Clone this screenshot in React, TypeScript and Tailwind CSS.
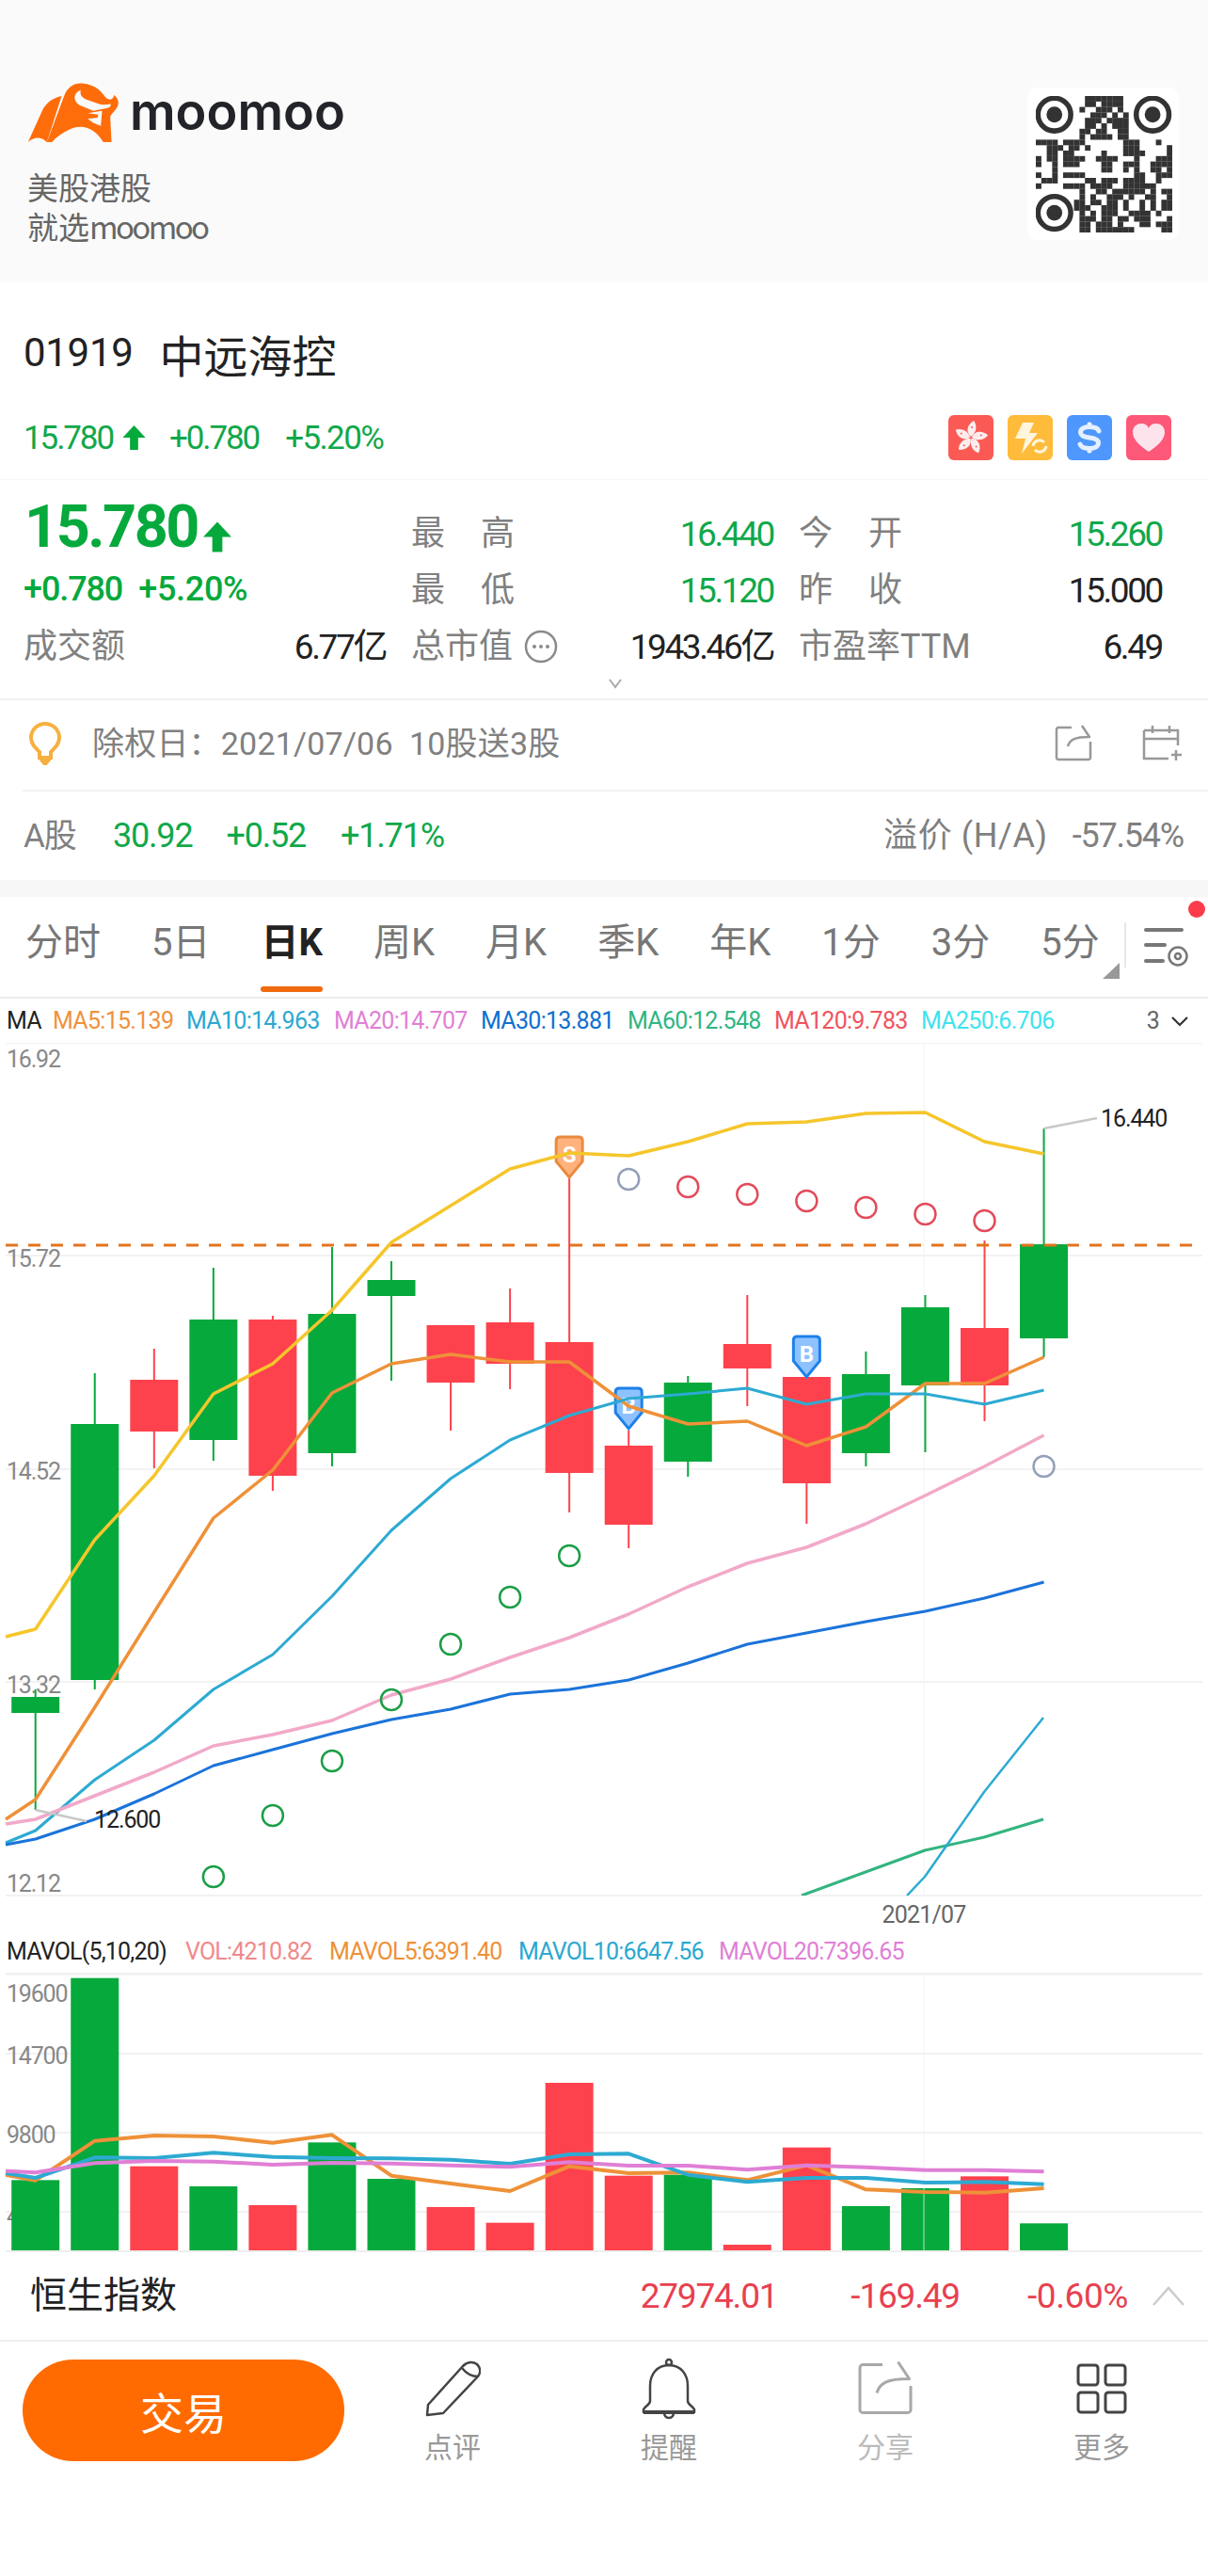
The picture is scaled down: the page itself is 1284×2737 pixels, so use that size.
import React from 'react';

const GREEN = '#06a93c';
const RED = '#fe424d';

const cx = (i: number) => 37.7 + 63.05 * i;
const top = 1109;
const volTop = 2097;

type Candle = { up: boolean; t: number; b: number; h: number; l: number };

// pixel values read off the picture, page coordinates
const candles: Candle[] = [
  { up: true, t: 1804, b: 1821, h: 1796, l: 1924 },
  { up: true, t: 1514, b: 1786, h: 1460, l: 1796 },
  { up: false, t: 1467, b: 1522, h: 1434, l: 1561 },
  { up: true, t: 1403, b: 1531, h: 1348, l: 1553 },
  { up: false, t: 1403, b: 1569, h: 1399, l: 1585 },
  { up: true, t: 1397, b: 1545, h: 1326, l: 1559 },
  { up: true, t: 1361, b: 1378, h: 1341, l: 1468 },
  { up: false, t: 1409, b: 1470, h: 1409, l: 1521 },
  { up: false, t: 1406, b: 1450, h: 1370, l: 1477 },
  { up: false, t: 1427, b: 1566, h: 1252, l: 1608 },
  { up: false, t: 1537, b: 1621, h: 1521, l: 1646 },
  { up: true, t: 1470, b: 1554, h: 1463, l: 1570 },
  { up: false, t: 1429, b: 1455, h: 1377, l: 1495 },
  { up: false, t: 1464, b: 1577, h: 1463, l: 1620 },
  { up: true, t: 1461, b: 1545, h: 1437, l: 1559 },
  { up: true, t: 1390, b: 1473, h: 1377, l: 1544 },
  { up: false, t: 1412, b: 1473, h: 1319, l: 1511 },
  { up: true, t: 1323, b: 1423, h: 1200, l: 1443 },
];

const yellow = [1732, 1637, 1569, 1482, 1450, 1393, 1321, 1282, 1243, 1226, 1229, 1214, 1195, 1193, 1184, 1183, 1214, 1227];
const orange = [1913, 1815, 1714, 1614, 1563, 1481, 1450, 1440, 1448, 1448, 1495, 1514, 1511, 1537, 1517, 1471, 1471, 1443];
const cyan = [1946, 1892, 1850, 1796, 1759, 1697, 1627, 1572, 1531, 1505, 1487, 1482, 1476, 1493, 1482, 1482, 1493, 1478];
const pink = [1934, 1909, 1884, 1856, 1844, 1829, 1802, 1785, 1762, 1741, 1716, 1687, 1662, 1645, 1620, 1590, 1559, 1526];
const blue = [1955, 1934, 1907, 1877, 1860, 1843, 1828, 1817, 1801, 1796, 1786, 1768, 1748, 1736, 1724, 1713, 1699, 1682];

const volBars = [832, 188, 788, 852, 912, 712, 828, 918, 968, 522, 818, 815, 1038, 728, 915, 858, 820, 970];
const volOrange = [833, 707, 690, 693, 713, 688, 818, 843, 867, 788, 810, 808, 832, 785, 862, 870, 872, 858];
const volBlue = [825, 760, 762, 745, 758, 762, 763, 767, 780, 750, 748, 815, 838, 825, 825, 840, 838, 845];
const volPurple = [808, 778, 771, 773, 783, 777, 779, 785, 790, 775, 786, 786, 799, 785, 791, 800, 800, 805];

const pts = (ys: number[], startY: number) =>
  `6,${startY - top} ` + ys.map((y, i) => `${cx(i)},${y - top}`).join(' ');
const volY = (z: number) => 2040 + z / 3 - volTop;
const volPts = (zs: number[], start: number) =>
  `6,${volY(start)} ` + zs.map((z, i) => `${cx(i)},${volY(z)}`).join(' ');

const qrRows = [
  '.........#######.........',
  '.........##.####.........',
  '........#..###.#.........',
  '..........###.#.#........',
  '.........###.####........',
  '.........##.#.###........',
  '........##.##..##........',
  '........#.####.##........',
  '####.####.......###...#..',
  '..###.##.#......###.....#',
  '..##.##.....#...####....#',
  '#.##.####..####...#...###',
  '#..#.###....##..###..####',
  '...#........##..#.#..##.#',
  '#..#.####.........##..###',
  '.###.....##.###.####..#..',
  '#....####.####..######...',
  '........#..##.######.#.##',
  '........#.#..###.#..##..#',
  '.......##.##.##.#..#.#.##',
  '.......###..###.#..#.#.##',
  '........#.#.###..####.#..',
  '........###.##.##.###...#',
  '........##.###.#...##.###',
  '........##.#######.....##',
];

const QrCode = () => (
  <div className="w-[161px] h-[162px] bg-white rounded-[10px] pl-[9px] pt-[9px]">
    <svg width="145" height="145" viewBox="0 0 25 25" fill="#333">
      {qrRows.map((row, r) =>
        row.split('').map((c, col) => (c === '#' ? <rect key={`${r}-${col}`} x={col} y={r} width="1.02" height="1.02" /> : null))
      )}
      {[[3.4, 3.4], [21.4, 3.4], [3.4, 21.4]].map(([x, y]) => (
        <g key={`${x}-${y}`}>
          <circle cx={x} cy={y} r="3" fill="none" stroke="#333" strokeWidth="0.95" />
          <circle cx={x} cy={y} r="1.45" />
        </g>
      ))}
    </svg>
  </div>
);

const Logo = () => (
  <svg width="99" height="66" viewBox="88 50 296 198" className="shrink-0">
    <path fill="#ff6d0a" d="M90 242L136 140C146 120 165 102 197 95L150 242C130 222 108 226 90 242Z" />
    <path fill="#ff6d0a" d="M150 242L205 95C216 65 240 52 265 55C300 58 322 76 336 98C350 112 362 106 364 92C376 100 384 118 372 134C366 144 358 150 352 160L356 242H330C302 194 260 184 226 200C200 212 180 226 166 242Z" />
    <path fill="#fafafa" d="M258 76C234 84 232 110 254 124L298 142L340 134C352 132 356 126 352 120C340 124 326 124 310 118L276 106C262 100 254 90 258 76Z" />
    <path fill="#fafafa" d="M280 150L326 142L322 190C306 186 292 178 280 168L312 164L314 154Z" />
  </svg>
);

const HkIcon = () => (
  <svg width="48" height="48" viewBox="0 0 48 48">
    <rect width="48" height="48" rx="6" fill="#fb5a54" />
    {[0, 72, 144, 216, 288].map(a => (
      <g key={a} transform={`rotate(${a} 24 24)`}>
        <path d="M24 23C18 18 20 10 27 6C31 11 30 19 24 23Z" fill="#fdeeee" />
        <circle cx="25" cy="13" r="1" fill="#fb5a54" />
      </g>
    ))}
  </svg>
);

const BoltIcon = () => (
  <svg width="48" height="48" viewBox="0 0 48 48">
    <rect width="48" height="48" rx="6" fill="#ffbb3a" />
    <path d="M16 8H28L23 19H32L15 41L19 25H8Z" fill="#fff4dc" />
    <path d="M27 33A7 7 0 0 1 39 29M41 33A7 7 0 0 1 29 37" fill="none" stroke="#fff4dc" strokeWidth="3" />
  </svg>
);

const DollarIcon = () => (
  <svg width="48" height="48" viewBox="0 0 48 48">
    <rect width="48" height="48" rx="6" fill="#4e97fc" />
    <path d="M34 17C33 14 29 12.5 24 12.5C18 12.5 14.5 15 14.5 18.5C14.5 22 18 23.2 24 24C30 24.8 33.5 26 33.5 29.5C33.5 33 30 35.5 24 35.5C19 35.5 15 34 14 31" fill="none" stroke="#e4f0ff" strokeWidth="5" strokeLinecap="round" />
    <rect x="21.5" y="7.5" width="5" height="5" rx="2" fill="#e4f0ff" />
    <rect x="21.5" y="35.5" width="5" height="5" rx="2" fill="#e4f0ff" />
  </svg>
);

const HeartIcon = () => (
  <svg width="48" height="48" viewBox="0 0 48 48">
    <rect width="48" height="48" rx="6" fill="#fd5878" />
    <path d="M24 39C14 32 7 26 7 18C7 12 12 9 16 9C20 9 23 11 24 14C25 11 28 9 32 9C36 9 41 12 41 18C41 26 34 32 24 39Z" fill="#fde4ec" />
  </svg>
);

const UpArrow = ({ w, h }: { w: number; h: number }) => (
  <svg width={w} height={h} viewBox="0 0 28 30" fill={GREEN} className="shrink-0">
    <path d="M14 0L28 15H19V30H9V15H0Z" />
  </svg>
);

const ShareIcon = ({ size, color, sw }: { size: number; color: string; sw: number }) => (
  <svg width={size} height={size} viewBox="0 0 40 40" fill="none" stroke={color} strokeWidth={sw}>
    <path d="M18 3H4C3 3 2 4 2 5V35C2 36 3 37 4 37H36C37 37 38 36 38 35V18" />
    <path d="M14 23C16 16 21 13 37 13L29 1" strokeLinejoin="round" />
  </svg>
);

const Marker = ({ x, y, fill, stroke, label }: { x: number; y: number; fill: string; stroke: string; label: string }) => (
  <g>
    <path
      d={`M${x - 14} ${y + 5}Q${x - 14} ${y + 1} ${x - 10} ${y + 1}H${x + 10}Q${x + 14} ${y + 1} ${x + 14} ${y + 5}V${y + 27}L${x} ${y + 44}L${x - 14} ${y + 27}Z`}
      fill={fill}
      stroke={stroke}
      strokeWidth="3"
    />
    <text x={x} y={y + 28} textAnchor="middle" fontSize="24" fontWeight="700" fill="#fff">{label}</text>
  </g>
);

const AxisLabel = ({ y, children }: { y: number; children: React.ReactNode }) => (
  <text x="7" y={y} fontSize="25" letterSpacing="-1.2" fill="#888">{children}</text>
);

const PriceChart = () => {
  const h = 2052 - top;
  const sp = (y: number) => y - top;
  return (
    <svg width="1284" height={h} viewBox={`0 0 1284 ${h}`} className="block">
      <defs>
        <clipPath id="plot"><rect x="0" y="0" width="1284" height={sp(2015)} /></clipPath>
      </defs>
      {[1109, 1335, 1562, 1788, 2015].map(y => (
        <line key={y} x1="6" x2="1278" y1={sp(y)} y2={sp(y)} stroke="#f2f2f2" strokeWidth="2" />
      ))}
      <line x1="982" x2="982" y1="0" y2={sp(2015)} stroke="#f2f2f2" strokeWidth="1" />
      <AxisLabel y={sp(1135)}>16.92</AxisLabel>
      <AxisLabel y={sp(1347)}>15.72</AxisLabel>
      <AxisLabel y={sp(1573)}>14.52</AxisLabel>
      <AxisLabel y={sp(1800)}>13.32</AxisLabel>
      <AxisLabel y={sp(2011)}>12.12</AxisLabel>
      {candles.map((c, i) => {
        const color = c.up ? GREEN : RED;
        return (
          <g key={i}>
            <line x1={cx(i)} x2={cx(i)} y1={sp(c.h)} y2={sp(c.l)} stroke={color} strokeWidth="2" />
            <rect x={cx(i) - 25.5} y={sp(c.t)} width="51" height={c.b - c.t} fill={color} />
          </g>
        );
      })}
      <line x1="6" x2="1268" y1={sp(1324)} y2={sp(1324)} stroke="#e2741f" strokeWidth="3" strokeDasharray="13 11" />
      <Marker x={cx(9)} y={sp(1208)} fill="#ffb27c" stroke="#ea8a3e" label="S" />
      <Marker x={cx(10)} y={sp(1475)} fill="#8ec2ff" stroke="#1e80ea" label="B" />
      <Marker x={cx(13)} y={sp(1420)} fill="#8ec2ff" stroke="#1e80ea" label="B" />
      <g fill="none" strokeLinejoin="round" clipPath="url(#plot)">
        <polyline points={pts(yellow, 1740)} stroke="#f5c62c" strokeWidth="3.5" />
        <polyline points={pts(orange, 1934)} stroke="#ee9138" strokeWidth="3.5" />
        <polyline points={pts(cyan, 1959)} stroke="#2daad2" strokeWidth="3" />
        <polyline points={pts(pink, 1939)} stroke="#f2a9c9" strokeWidth="3.5" />
        <polyline points={pts(blue, 1961)} stroke="#1b73da" strokeWidth="3" />
        <polyline points={`852,${sp(2015)} 920,${sp(1990)} 983,${sp(1967)} 1046,${sp(1953)} 1109,${sp(1934)}`} stroke="#33b47f" strokeWidth="3" />
        <polyline points={`964,${sp(2015)} 983,${sp(1995)} 1046,${sp(1905)} 1109,${sp(1826)}`} stroke="#2daad2" strokeWidth="2.5" />
      </g>
      <g fill="none" strokeWidth="2.5">
        {[[3, 1995], [4, 1930], [5, 1872], [6, 1807], [7, 1748], [8, 1698], [9, 1654]].map(([i, y]) => (
          <circle key={i} cx={cx(i)} cy={sp(y)} r="11" stroke="#1a9e46" />
        ))}
        {[[11, 1262], [12, 1270], [13, 1277], [14, 1284], [15, 1291], [16, 1298]].map(([i, y]) => (
          <circle key={i} cx={cx(i)} cy={sp(y)} r="11" stroke="#e24b5a" />
        ))}
        <circle cx={cx(10)} cy={sp(1254)} r="11" stroke="#93a0b8" />
        <circle cx={cx(17)} cy={sp(1559)} r="11" stroke="#93a0b8" />
      </g>
      <polyline points={`${cx(17)},${sp(1200)} 1166,${sp(1189)}`} stroke="#c8c8c8" strokeWidth="2.5" fill="none" />
      <text x="1170" y={sp(1198)} fontSize="25" letterSpacing="-1.1" fill="#222">16.440</text>
      <polyline points={`${cx(0)},${sp(1924)} 92,${sp(1936)}`} stroke="#c8c8c8" strokeWidth="2.5" fill="none" />
      <text x="100" y={sp(1943)} fontSize="25" letterSpacing="-1.1" fill="#222">12.600</text>
      <text x="982" y={sp(2044)} fontSize="25" letterSpacing="-0.8" textAnchor="middle" fill="#666">2021/07</text>
    </svg>
  );
};

const VolumeChart = () => {
  const h = 2394 - volTop;
  return (
    <svg width="1284" height={h} viewBox={`0 0 1284 ${h}`} className="block">
      <line x1="6" x2="1278" y1="1" y2="1" stroke="#f0f0f0" strokeWidth="3" />
      {[2183, 2267, 2351].map(y => (
        <line key={y} x1="6" x2="1278" y1={y - volTop} y2={y - volTop} stroke="#f2f2f2" strokeWidth="2" />
      ))}
      <line x1="982" x2="982" y1="0" y2={2392 - volTop} stroke="#f2f2f2" strokeWidth="1" />
      <AxisLabel y={2128 - volTop}>19600</AxisLabel>
      <AxisLabel y={2194 - volTop}>14700</AxisLabel>
      <AxisLabel y={2278 - volTop}>9800</AxisLabel>
      <AxisLabel y={2364 - volTop}>4900</AxisLabel>
      {volBars.map((z, i) => (
        <rect key={i} x={cx(i) - 25.5} y={volY(z)} width="51" height={2392 - volTop - volY(z)} fill={candles[i].up ? GREEN : RED} />
      ))}
      <line x1="982" x2="982" y1={volY(858)} y2={2392 - volTop} stroke="#ffffff" strokeOpacity="0.7" strokeWidth="1" />
      <g fill="none" strokeLinejoin="round" strokeWidth="4">
        <polyline points={volPts(volOrange, 815)} stroke="#ee9138" />
        <polyline points={volPts(volBlue, 810)} stroke="#2daad2" />
        <polyline points={volPts(volPurple, 803)} stroke="#e07fd6" />
      </g>
      <line x1="6" x2="1278" y1={2393 - volTop} y2={2393 - volTop} stroke="#eeeeee" strokeWidth="2" />
    </svg>
  );
};

const Stat = ({ label, value, color }: { label: React.ReactNode; value: string; color: string }) => (
  <div className="flex items-center justify-between h-[60px]">
    <span className="text-[36px] leading-none text-[#808080]">{label}</span>
    <span className={`text-[37px] leading-none tracking-[-2.4px] ${color}`}>{value}</span>
  </div>
);

const TwoChar = ({ a, b }: { a: string; b: string }) => (
  <span className="flex w-[110px] justify-between"><span>{a}</span><span>{b}</span></span>
);

const tabs = ['分时', '5日', '日K', '周K', '月K', '季K', '年K', '1分', '3分', '5分'];

const maItems = [
  { text: 'MA5:15.139', color: 'text-[#f0923b]', w: 'w-[142px]' },
  { text: 'MA10:14.963', color: 'text-[#2ba8d0]', w: 'w-[157px]' },
  { text: 'MA20:14.707', color: 'text-[#e07fd6]', w: 'w-[156px]' },
  { text: 'MA30:13.881', color: 'text-[#0f6fd0]', w: 'w-[156px]' },
  { text: 'MA60:12.548', color: 'text-[#2fb583]', w: 'w-[156px]' },
  { text: 'MA120:9.783', color: 'text-[#f0545d]', w: 'w-[156px]' },
  { text: 'MA250:6.706', color: 'text-[#3fe3ee]', w: 'w-[156px]' },
];

const BottomItem = ({ icon, label, color }: { icon: React.ReactNode; label: string; color: string }) => (
  <div className="w-[230px] shrink-0 flex flex-col items-center">
    <div className="h-[70px] flex items-center justify-center">{icon}</div>
    <span className={`text-[30px] leading-none mt-[13px] ${color}`}>{label}</span>
  </div>
);

export default function App() {
  return (
    <div className="w-[1284px] h-[2737px] bg-white overflow-hidden font-['Roboto','Noto_Sans_CJK_SC',sans-serif]">
      {/* promo header */}
      <div className="h-[300px] bg-[#fafafa] flex justify-between pl-[29px] pr-[31px] pt-[87px] font-['Noto_Sans_CJK_SC','Noto_Sans',sans-serif]">
        <div>
          <div className="flex items-center h-[66px]">
            <Logo />
            <span className="ml-[10px] text-[54px] leading-none font-semibold text-[#222429] font-['Inter',sans-serif] mt-[-2px]">moomoo</span>
          </div>
          <div className="mt-[24px] text-[33px] leading-[42px] text-[#666]">美股港股</div>
          <div className="text-[33px] leading-[42px] text-[#666]">
            就选<span className="tracking-[-2.6px]">moomoo</span>
          </div>
        </div>
        <div className="pt-[6px]"><QrCode /></div>
      </div>

      {/* name */}
      <div className="h-[209px] pl-[25px] pr-[39px] pt-[47px]">
        <div className="flex items-center h-[56px] text-[#222]">
          <span className="text-[42px] leading-none tracking-[-0.3px]">01919</span>
          <span className="ml-[28px] text-[47px] leading-none font-['Noto_Sans_CJK_SC',sans-serif]">中远海控</span>
        </div>
        <div className="flex items-center justify-between mt-[38px] h-[48px]">
          <div className="flex items-center text-[35px] leading-none tracking-[-2.1px] text-[#10a84a]">
            <span>15.780</span>
            <span className="ml-[9px]"><UpArrow w={27} h={26} /></span>
            <span className="ml-[24px]">+0.780</span>
            <span className="ml-[28px] tracking-[-1.6px]">+5.20%</span>
          </div>
          <div className="flex gap-[15px]">
            <HkIcon />
            <BoltIcon />
            <DollarIcon />
            <HeartIcon />
          </div>
        </div>
      </div>

      {/* quote */}
      <div className="h-[235px] border-t border-[#f6f6f6] border-b-2 border-b-[#f0f0f0] relative pl-[25px] pr-[49px] pt-[27px]">
        <div className="grid grid-cols-[385px_385px_386px] gap-x-[27px]">
          <div className="row-span-2 text-[#06a93c]">
            <div className="flex items-end h-[60px] mt-[-7px]">
              <span className="text-[63px] leading-[60px] font-bold tracking-[-2.5px] ml-[1px]">15.780</span>
              <span className="ml-[6px] mb-[2px]"><UpArrow w={30} h={35} /></span>
            </div>
            <div className="flex mt-[18px] text-[36px] leading-[36px] font-medium tracking-[-1.1px]">
              <span>+0.780</span>
              <span className="ml-[17px] tracking-[-0.3px]">+5.20%</span>
            </div>
          </div>
          <Stat label={<TwoChar a="最" b="高" />} value="16.440" color="text-[#10a84a]" />
          <Stat label={<TwoChar a="今" b="开" />} value="15.260" color="text-[#10a84a]" />
          <Stat label={<TwoChar a="最" b="低" />} value="15.120" color="text-[#10a84a]" />
          <Stat label={<TwoChar a="昨" b="收" />} value="15.000" color="text-[#222]" />
          <Stat label="成交额" value="6.77亿" color="text-[#222]" />
          <Stat
            label={
              <span className="flex items-center">
                总市值
                <svg width="36" height="36" viewBox="0 0 36 36" className="ml-[12px]" fill="none">
                  <circle cx="18" cy="18" r="16" stroke="#8a8a8a" strokeWidth="2.5" />
                  <circle cx="11" cy="18" r="2" fill="#8a8a8a" />
                  <circle cx="18" cy="18" r="2" fill="#8a8a8a" />
                  <circle cx="25" cy="18" r="2" fill="#8a8a8a" />
                </svg>
              </span>
            }
            value="1943.46亿"
            color="text-[#222]"
          />
          <Stat label="市盈率TTM" value="6.49" color="text-[#222]" />
        </div>
        <svg width="16" height="12" viewBox="0 0 16 12" fill="none" stroke="#aaa" strokeWidth="2" className="absolute left-[646px] top-[210px]">
          <path d="M2 2L8 10L14 2" />
        </svg>
      </div>

      {/* ex-dividend */}
      <div className="h-[95px] flex items-center justify-between pl-[31px] pr-[25px] pb-[4px]">
        <div className="flex items-center">
          <svg width="34" height="46" viewBox="0 0 34 46" fill="none" stroke="#f6b03f" strokeWidth="4">
            <path d="M11 32C6 27 2 23 2 17C2 8 9 2 17 2C25 2 32 8 32 17C32 23 28 27 23 32V38H11Z" />
            <path d="M13 40H21L17 45Z" fill="#f6b03f" />
          </svg>
          <span className="ml-[33px] text-[34px] leading-none text-[#808080] tracking-[0.2px]">除权日：2021/07/06&nbsp;&nbsp;10股送3股</span>
        </div>
        <div className="flex items-center gap-[53px]">
          <ShareIcon size={40} color="#999" sw={2.5} />
          <svg width="45" height="40" viewBox="0 0 45 40" fill="none" stroke="#999" strokeWidth="2.5">
            <path d="M2 6H38V22M28 36H2V6M2 15H38M11 1V9M29 1V9M36 27V38M31 32H42" />
          </svg>
        </div>
      </div>

      {/* A share */}
      <div className="ml-[24px] h-[96px] border-t-2 border-[#f2f2f2] flex items-center justify-between pr-[26px] text-[36px] leading-none">
        <div className="flex items-center tracking-[-1.2px] text-[#10a84a]">
          <span className="text-[#808080] w-[95px] ml-[1px] text-[35px]">A股</span>
          <span>30.92</span>
          <span className="ml-[36px]">+0.52</span>
          <span className="ml-[37px]">+1.71%</span>
        </div>
        <div className="flex items-center text-[#808080] tracking-[0.6px]">
          <span>溢价 (H/A)</span>
          <span className="ml-[26px] tracking-[-1.2px]">-57.54%</span>
        </div>
      </div>
      <div className="h-[18px] bg-[#f7f7f7]" />

      {/* period tabs */}
      <div className="h-[108px] relative flex items-center border-b-2 border-[#ececec] pl-[27px] gap-[54px] pb-[8px]">
        {tabs.map(t => (
          <div key={t} className="relative whitespace-nowrap">
            <span className={`text-[40px] leading-none ${t === '日K' ? 'font-bold text-[#222]' : 'text-[#777]'}`}>{t}</span>
            {t === '日K' && <div className="absolute left-0 right-0 top-[66px] h-[6px] rounded-full bg-[#f06a10]" />}
          </div>
        ))}
        <div className="absolute left-[1172px] top-[70px] w-0 h-0 border-l-[18px] border-l-transparent border-b-[17px] border-b-[#999]" />
        <div className="absolute left-[1195px] top-[27px] w-[2px] h-[48px] bg-[#e8e8e8]" />
        <svg width="48" height="44" viewBox="0 0 48 44" fill="none" stroke="#777" className="absolute left-[1216px] top-[31px]">
          <path d="M2 4H40M2 20H22M2 37H20" strokeWidth="4" strokeLinecap="round" />
          <circle cx="36" cy="32" r="9.5" strokeWidth="2.5" />
          <circle cx="36" cy="32" r="3" strokeWidth="2.5" />
        </svg>
        <div className="absolute left-[1263px] top-[4px] w-[18px] h-[18px] rounded-full bg-[#fb3c4a]" />
      </div>

      {/* MA legend */}
      <div className="h-[47px] flex items-center pl-[7px] pr-[21px] text-[25px] leading-none tracking-[-0.7px]">
        <span className="w-[49px] text-[#222]">MA</span>
        {maItems.map(m => (
          <span key={m.text} className={`${m.w} ${m.color}`}>{m.text}</span>
        ))}
        <span className="ml-auto text-[#666]">3</span>
        <svg width="18" height="12" viewBox="0 0 18 12" fill="none" stroke="#333" strokeWidth="2.2" className="ml-[13px]">
          <path d="M1 2L9 10L17 2" />
        </svg>
      </div>

      <PriceChart />

      {/* volume legend */}
      <div className="h-[45px] flex items-center pl-[7px] text-[25px] leading-none tracking-[-0.8px]">
        <span className="w-[190px] text-[#222]">MAVOL(5,10,20)</span>
        <span className="w-[153px] text-[#f08a8a]">VOL:4210.82</span>
        <span className="w-[201px] text-[#ee9138]">MAVOL5:6391.40</span>
        <span className="w-[213px] text-[#2ba8d0]">MAVOL10:6647.56</span>
        <span className="text-[#e07fd6]">MAVOL20:7396.65</span>
      </div>

      <VolumeChart />

      {/* index bar */}
      <div className="h-[95px] flex items-center border-b-2 border-[#efefef] pl-[32px] pr-[24px]">
        <span className="text-[39px] leading-none text-[#222] mr-auto">恒生指数</span>
        <div className="flex items-center text-[37px] leading-none tracking-[-1.2px] text-[#e8404f]">
          <span>27974.01</span>
          <span className="ml-[78px]">-169.49</span>
          <span className="ml-[72px] tracking-[-0.4px]">-0.60%</span>
        </div>
        <svg width="36" height="22" viewBox="0 0 36 22" fill="none" stroke="#ccc" strokeWidth="2.5" className="ml-[25px]">
          <path d="M2 20L18 2L34 20" />
        </svg>
      </div>

      {/* bottom actions */}
      <div className="flex pl-[24px] pt-[19px]">
        <button className="w-[342px] h-[108px] shrink-0 rounded-full bg-[#ff6b00] text-white text-[46px] leading-none font-['Noto_Sans_CJK_SC',sans-serif]">交易</button>
        <div className="flex mt-[-4px] shrink-0">
          <BottomItem
            label="点评"
            color="text-[#999]"
            icon={
              <svg width="60" height="60" viewBox="0 0 60 60" fill="none" stroke="#444" strokeWidth="2.5" strokeLinejoin="round">
                <path d="M4 47L41 6C46 1 52 1 56 4C60 8 60 13 57 17L20 56L3 58Z" />
                <path d="M40 8C44 13 50 17 57 17" />
              </svg>
            }
          />
          <BottomItem
            label="提醒"
            color="text-[#999]"
            icon={
              <svg width="58" height="66" viewBox="0 0 58 66" fill="none" stroke="#444" strokeWidth="2.5" strokeLinejoin="round">
                <path d="M29 8C16 8 9 18 9 30V46C9 50 4 51 2 55V58H56V55C54 51 49 50 49 46V30C49 18 42 8 29 8Z" />
                <circle cx="29" cy="5" r="3" />
                <path d="M24 58C24 62 26 64 29 64C32 64 34 62 34 58" />
                <path d="M2 58H56" strokeWidth="4" />
              </svg>
            }
          />
          <BottomItem label="分享" color="text-[#bbb]" icon={<ShareIcon size={60} color="#a8a8a8" sw={2} />} />
          <BottomItem
            label="更多"
            color="text-[#999]"
            icon={
              <svg width="54" height="54" viewBox="0 0 54 54" fill="none" stroke="#444" strokeWidth="3">
                <rect x="2" y="2" width="21" height="21" rx="3" />
                <rect x="31" y="2" width="21" height="21" rx="3" />
                <rect x="2" y="31" width="21" height="21" rx="3" />
                <rect x="31" y="31" width="21" height="21" rx="3" />
              </svg>
            }
          />
        </div>
      </div>
    </div>
  );
}
